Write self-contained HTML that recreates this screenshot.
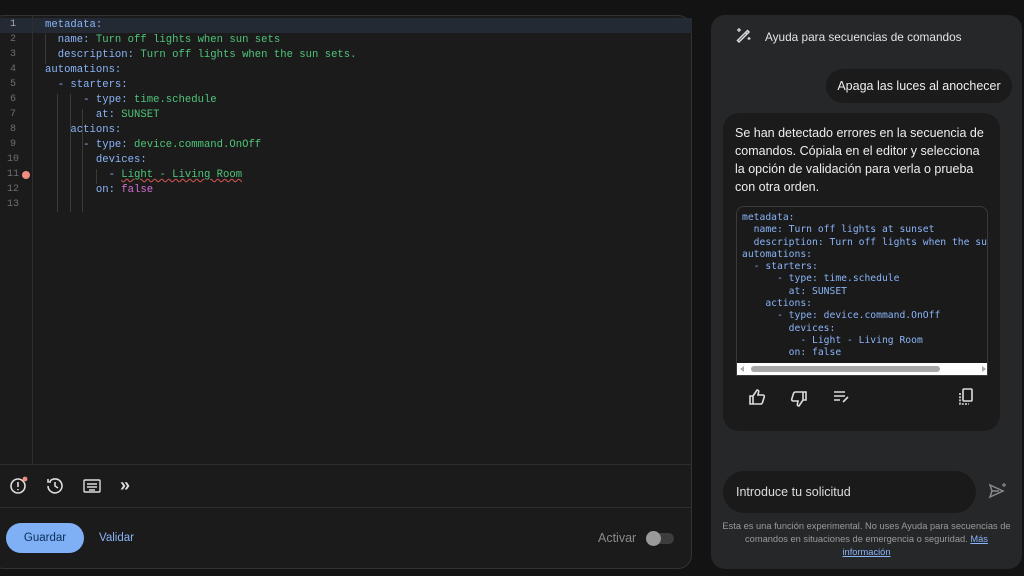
<!DOCTYPE html>
<html><head><meta charset="utf-8"><style>
*{margin:0;padding:0;box-sizing:border-box}
body{width:1024px;height:576px;background:#131313;position:relative;overflow:hidden;font-family:"Liberation Sans",sans-serif}
.ed{position:absolute;left:-10px;top:15px;width:702px;height:554px;background:#1b1b1b;border:1px solid #333;border-radius:14px}
.gut{position:absolute;left:0;top:16px;width:33px;height:448px;border-right:1px solid #2e2e2e}
.ln{position:absolute;left:0;width:33px;font:10px "Liberation Mono",monospace;color:#6e6e6e;padding-left:10px}
.cl{position:absolute;left:45px;font:10.6px "Liberation Mono",monospace;white-space:pre;color:#8ab4f8}
.g{color:#4fc47a}.p{color:#d46fd6}
.hl{position:absolute;left:0;top:18px;width:692px;height:15px;background:#242a33}
.guide{position:absolute;width:1px;background:#3a3a3a}
.rp{position:absolute;left:711px;top:15px;width:311px;height:554px;background:#262729;border-radius:14px}
.code{position:absolute;left:736px;top:206px;width:252px;height:170px;background:#1a1a1a;border:1px solid #3a3a3a;border-radius:8px 8px 0 0;overflow:hidden}
.code pre{font:9.7px "DejaVu Sans Mono",monospace;color:#8ab4f8;line-height:12.3px;padding:5px 0 0 5px;white-space:pre}
</style></head><body>
<div class="ed"></div>
<div class="hl"></div>
<div class="gut"></div>
<div style="position:absolute;left:0;top:464px;width:692px;height:1px;background:#2e2e2e"></div>
<div style="position:absolute;left:0;top:507px;width:692px;height:1px;background:#2e2e2e"></div>
<div class="ln" style="top:19px;color:#aaa">1</div>
<div class="ln" style="top:34px">2</div><div class="ln" style="top:49px">3</div><div class="ln" style="top:64px">4</div><div class="ln" style="top:79px">5</div><div class="ln" style="top:94px">6</div><div class="ln" style="top:109px">7</div><div class="ln" style="top:124px">8</div><div class="ln" style="top:139px">9</div><div class="ln" style="top:154px;padding-left:7px">10</div><div class="ln" style="top:169px;padding-left:7px">11</div><div class="ln" style="top:184px;padding-left:7px">12</div><div class="ln" style="top:199px;padding-left:7px">13</div>
<div style="position:absolute;left:22px;top:171px;width:8px;height:8px;border-radius:50%;background:#f28b82"></div>
<div class="guide" style="left:45px;top:34px;height:30px"></div>
<div class="guide" style="left:57px;top:94px;height:118px"></div>
<div class="guide" style="left:70px;top:94px;height:118px"></div>
<div class="guide" style="left:82px;top:109px;height:103px"></div>
<div class="guide" style="left:96px;top:169px;height:15px"></div>
<div class="cl" style="top:19px">metadata:</div>
<div class="cl" style="top:34px">  name: <span class="g">Turn off lights when sun sets</span></div>
<div class="cl" style="top:49px">  description: <span class="g">Turn off lights when the sun sets.</span></div>
<div class="cl" style="top:64px">automations:</div>
<div class="cl" style="top:79px">  - starters:</div>
<div class="cl" style="top:94px">      - type: <span class="g">time.schedule</span></div>
<div class="cl" style="top:109px">        at: <span class="g">SUNSET</span></div>
<div class="cl" style="top:124px">    actions:</div>
<div class="cl" style="top:139px">      - type: <span class="g">device.command.OnOff</span></div>
<div class="cl" style="top:154px">        devices:</div>
<div class="cl" style="top:169px">          - <span class="g" style="text-decoration:underline wavy #c0504d">Light - Living Room</span></div>
<div class="cl" style="top:184px">        on: <span class="p">false</span></div>
<svg style="position:absolute;left:9px;top:476px" width="22" height="20" viewBox="0 0 22 20" fill="none" stroke="#ddd" stroke-width="1.6"><circle cx="9" cy="10" r="7"/><path d="M9 6v5M9 13v1.2"/><circle cx="16" cy="3" r="2.4" fill="#f28b82" stroke="none"/></svg>
<svg style="position:absolute;left:45px;top:477px" width="20" height="18" viewBox="0 0 20 18" fill="none" stroke="#ddd" stroke-width="1.6"><path d="M3 9a7 7 0 1 0 2-5M3 2v3h3"/><path d="M10 5v4l3 2"/></svg>
<svg style="position:absolute;left:83px;top:479px" width="18" height="14" viewBox="0 0 18 14" fill="none" stroke="#ddd" stroke-width="1.4"><rect x="1" y="1" width="16" height="12" rx="1"/><path d="M4 5h10M4 8h10M6 11h6"/></svg>
<div style="position:absolute;left:120px;top:475px;color:#ddd;font-size:18px;font-weight:bold">»</div>
<div style="position:absolute;left:6px;top:523px;width:78px;height:30px;border-radius:15px;background:#7fb0f5;color:#0b2e5e;font-size:11.5px;text-align:center;line-height:30px">Guardar</div>
<div style="position:absolute;left:99px;top:532px;color:#8ab4f8;font-size:11.5px">Validar</div>
<div style="position:absolute;left:598px;top:531px;color:#8a8a8a;font-size:12.5px">Activar</div>
<div style="position:absolute;left:648px;top:533px;width:26px;height:11px;border-radius:6px;background:#3d3d3d"></div>
<div style="position:absolute;left:646px;top:531px;width:15px;height:15px;border-radius:50%;background:#9a9a9a"></div>
<div class="rp"></div>
<svg style="position:absolute;left:735px;top:27px" width="18" height="18" viewBox="0 0 18 18" fill="none" stroke="#ddd" stroke-width="1.5"><path d="M4 15L14 5l-1.5-1.5L2.5 13.5zM11 6l1.5 1.5"/><path d="M4 1v4M2 3h4M14 10v3M12.5 11.5h3" stroke-width="1.2"/></svg>
<div style="position:absolute;left:765px;top:30px;color:#e3e3e3;font-size:11.8px">Ayuda para secuencias de comandos</div>
<div style="position:absolute;left:826px;top:69px;width:186px;height:34px;border-radius:17px;background:#1b1b1b;color:#eee;font-size:12.5px;line-height:34px;text-align:center">Apaga las luces al anochecer</div>
<div style="position:absolute;left:723px;top:113px;width:277px;height:318px;border-radius:16px;background:#1b1b1b"></div>
<div style="position:absolute;left:735px;top:124px;width:252px;color:#eee;font-size:12.5px;line-height:18px">Se han detectado errores en la secuencia de comandos. Cópiala en el editor y selecciona la opción de validación para verla o prueba con otra orden.</div>
<div class="code"><pre>metadata:
  name: Turn off lights at sunset
  description: Turn off lights when the sun sets.
automations:
  - starters:
      - type: time.schedule
        at: SUNSET
    actions:
      - type: device.command.OnOff
        devices:
          - Light - Living Room
        on: false</pre>
<div style="position:absolute;left:0;bottom:0;width:252px;height:12px;background:#fff"><div style="position:absolute;left:14px;top:3px;width:189px;height:6px;border-radius:3px;background:#a8a8a8"></div><div style="position:absolute;left:3px;top:3px;border:3px solid transparent;border-right:4px solid #aaa;border-left:0"></div><div style="position:absolute;right:3px;top:3px;border:3px solid transparent;border-left:4px solid #aaa;border-right:0"></div></div></div>
<svg style="position:absolute;left:748px;top:388px" width="18" height="18" viewBox="0 0 18 18" fill="none" stroke="#ddd" stroke-width="1.6"><path d="M2 8h3v8H2zM5 8l4-6c1.5 0 2 1 1.5 2.5L10 7h5c1 0 1.5 1 1.2 2l-1.7 5.5c-.3.8-1 1.5-2 1.5H5"/></svg>
<svg style="position:absolute;left:790px;top:390px" width="18" height="18" viewBox="0 0 18 18" fill="none" stroke="#ddd" stroke-width="1.6"><path d="M16 10h-3V2h3zM13 10l-4 6c-1.5 0-2-1-1.5-2.5L8 11H3c-1 0-1.5-1-1.2-2l1.7-5.5C3.8 2.7 4.5 2 5.5 2H13"/></svg>
<svg style="position:absolute;left:833px;top:390px" width="18" height="14" viewBox="0 0 18 14" fill="none" stroke="#ddd" stroke-width="1.6"><path d="M1 2h11M1 6h11M1 10h6M10 12l5-5"/></svg>
<svg style="position:absolute;left:958px;top:388px" width="16" height="18" viewBox="0 0 16 18" fill="none" stroke="#ddd" stroke-width="1.6"><rect x="5" y="1" width="9" height="12" rx="1"/><path d="M2 5v11h9" stroke-dasharray="2 1.2"/></svg>
<div style="position:absolute;left:723px;top:471px;width:253px;height:42px;border-radius:21px;background:#1a1a1a;color:#ddd;font-size:12.5px;line-height:42px;padding-left:13px">Introduce tu solicitud</div>
<svg style="position:absolute;left:988px;top:482px" width="20" height="18" viewBox="0 0 20 18" fill="none" stroke="#8a8a8a" stroke-width="1.5"><path d="M2 3l13 6-13 6 2-6z M4 9h7"/><path d="M16 1v4M14 3h4" stroke-width="1.2"/></svg>
<div style="position:absolute;left:711px;top:520px;width:311px;color:#9a9a9a;font-size:9.3px;line-height:13px;text-align:center;white-space:nowrap">Esta es una función experimental. No uses Ayuda para secuencias de<br>comandos en situaciones de emergencia o seguridad. <span style="color:#8ab4f8;text-decoration:underline">Más</span><br><span style="color:#8ab4f8;text-decoration:underline">información</span></div>
</body></html>
